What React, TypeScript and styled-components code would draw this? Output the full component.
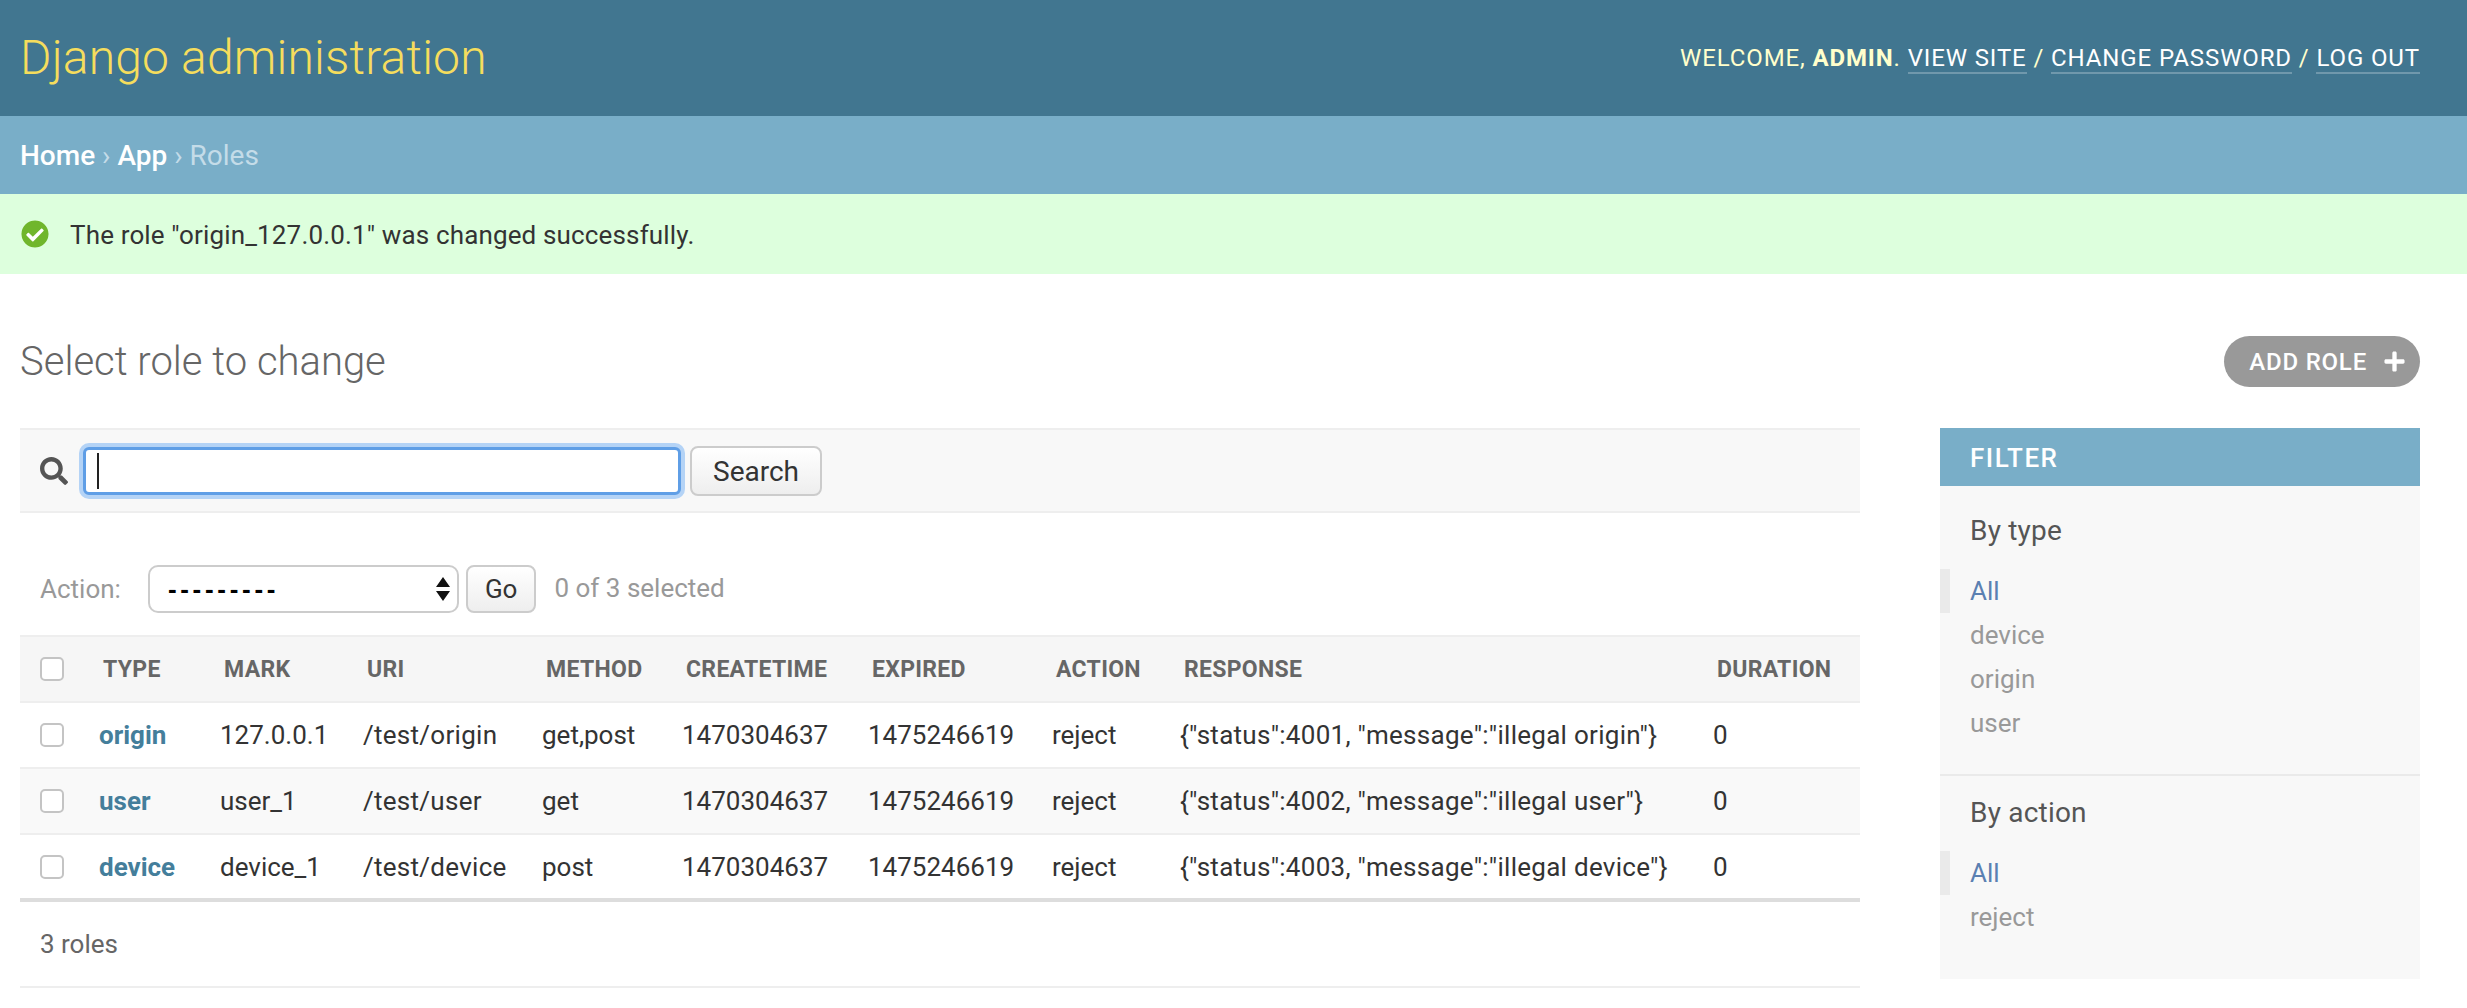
import * as React from "react";
import styled, { createGlobalStyle } from "styled-components";
import { FaSearch, FaCheckCircle, FaPlus } from "react-icons/fa";

const GlobalStyle = createGlobalStyle`
  html, body {
    margin: 0;
    padding: 0;
    background: #ffffff;
    font-family: Roboto, "Liberation Sans", sans-serif;
    color: #333333;
    overflow: hidden;
  }
  * { box-sizing: border-box; }
`;

const Header = styled("div")`
  display: flex;
  align-items: center;
  justify-content: space-between;
  height: 116px;
  padding: 0 47px 0 20px;
  background: #417690;
`;

const Branding = styled("h1")`
  margin: -2px 0 0;
  font-size: 48px;
  font-weight: 300;
  letter-spacing: 0.18px;
  color: #f5dd5d;
`;

const UserTools = styled("div")`
  font-size: 24px;
  font-weight: 400;
  letter-spacing: 0.88px;
  text-transform: uppercase;
  color: #ffc;

  strong {
    font-weight: 700;
  }
`;

const ToolLink = styled("a")`
  color: #fff;
  border-bottom: 2px solid rgba(255, 255, 255, 0.25);
  padding-bottom: 0;
`;

const Breadcrumbs = styled("div")`
  display: flex;
  align-items: center;
  height: 78px;
  padding: 0 20px;
  font-size: 28px;
  font-weight: 400;
  color: #c4dce8;
  background: #79aec8;

  a {
    color: #fff;
    font-weight: 500;
  }
`;

const Message = styled("div")`
  display: flex;
  align-items: center;
  gap: 21px;
  height: 80px;
  padding: 0 21px;
  font-size: 26px;
  letter-spacing: 0.15px;
  color: #333;
  background: #dfd;

  svg {
    width: 28px;
    height: 28px;
    color: #70b62c;
    background: radial-gradient(circle, #fff 55%, transparent 56%);
    border-radius: 50%;
  }
`;

const MessageText = styled("span")`
  padding-top: 1px;
`;

const Content = styled("div")`
  padding: 0 47px 0 20px;
`;

const TitleRow = styled("div")`
  display: flex;
  align-items: center;
  justify-content: space-between;
  height: 154px;
  padding-top: 21px;
`;

const PageTitle = styled("h2")`
  margin: 0;
  font-size: 40px;
  font-weight: 300;
  color: #666;
`;

const AddButton = styled("a")`
  display: flex;
  align-items: center;
  gap: 16px;
  height: 51px;
  padding: 0 14px 0 25px;
  border-radius: 26px;
  background: #999;
  color: #fff;
  font-size: 24px;
  font-weight: 500;
  letter-spacing: 0.8px;

  svg {
    width: 23px;
    height: 23px;
  }
`;

const Main = styled("div")`
  display: flex;
  align-items: flex-start;
  gap: 80px;
`;

const ChangeList = styled("div")`
  flex: 0 0 1840px;
`;

const Toolbar = styled("div")`
  display: flex;
  align-items: center;
  height: 85px;
  padding: 0 20px;
  background: #f8f8f8;
  border-top: 2px solid #eee;
  border-bottom: 2px solid #eee;

  svg {
    flex: none;
    width: 28px;
    height: 28px;
    color: #555;
    margin-right: 15px;
  }
`;

const SearchField = styled("div")`
  position: relative;
  width: 598px;
  height: 48px;
  margin-right: 9px;
  border: 3px solid #5f9ee6;
  border-radius: 6px;
  box-shadow: 0 0 0 4px #b4d3f6;
  background: #fff;
`;

const SearchCaret = styled("span")`
  position: absolute;
  left: 11px;
  top: 3px;
  width: 2px;
  height: 36px;
  background: #222;
`;

const SearchInput = styled("input")`
  display: block;
  width: 100%;
  height: 100%;
  border: 0;
  outline: 0;
  background: transparent;
`;

const Button = styled("button")<{ $large?: boolean }>`
  height: ${({ $large }) => ($large ? "50px" : "48px")};
  padding: ${({ $large }) => ($large ? "2px 21px 0" : "0 17px")};
  border: 2px solid #ccc;
  border-radius: 8px;
  background: linear-gradient(#ffffff, #eeeeee);
  color: #333;
  font-family: Roboto, sans-serif;
  font-size: ${({ $large }) => ($large ? "28px" : "26px")};
`;

const Actions = styled("div")`
  display: flex;
  align-items: center;
  height: 122px;
  padding: 30px 20px 0;
  font-size: 26px;
  color: #999;
`;

const ActionLabel = styled("label")`
  margin-right: 27px;
`;

const SelectWrap = styled("div")`
  position: relative;
  width: 311px;
  height: 48px;
  margin-right: 7px;
`;

const ActionSelect = styled("select")`
  appearance: none;
  width: 100%;
  height: 100%;
  padding: 0 18px;
  border: 2px solid #ccc;
  border-radius: 10px;
  background: #fff;
  color: #000;
  font-family: "Liberation Sans", sans-serif;
  font-size: 26px;
  font-weight: 700;
  letter-spacing: 3.7px;
`;

const SelectArrows = styled("svg")`
  position: absolute;
  right: 9px;
  top: 12px;
  width: 14px;
  height: 24px;
`;

const Counter = styled("span")`
  margin-left: 18px;
  margin-top: -2px;
`;

const Table = styled("table")`
  width: 100%;
  table-layout: fixed;
  border-collapse: collapse;
  border-top: 2px solid #eee;
  border-bottom: 4px solid #ddd;
`;

const Th = styled("th")`
  height: 66px;
  padding: 0 0 0 24px;
  background: #f6f6f6;
  border-bottom: 2px solid #eee;
  color: #666;
  font-size: 23px;
  font-weight: 700;
  letter-spacing: 0.3px;
  text-align: left;
  text-transform: uppercase;
  white-space: nowrap;
`;

const Row = styled("tr")<{ $alt?: boolean }>`
  background: ${({ $alt }) => ($alt ? "#f9f9f9" : "#fff")};
`;

const Td = styled("td")<{ $wide?: boolean }>`
  height: 66px;
  padding: 0 20px;
  border-bottom: 2px solid #eee;
  color: #333;
  font-size: 26px;
  letter-spacing: ${({ $wide }) => ($wide ? "0.28px" : "0")};
  white-space: nowrap;
`;

const CheckCell = styled(Td)`
  padding: 0 0 0 20px;
`;

const CheckHead = styled(Th)`
  padding: 0 0 0 20px;
`;

const Check = styled("input")`
  appearance: none;
  display: block;
  width: 24px;
  height: 24px;
  margin: 0;
  border: 2px solid #c4c4c4;
  border-radius: 5px;
  background: #fff;
`;

const RowLink = styled("a")`
  color: #447e9b;
  font-weight: 700;
`;

const Paginator = styled("p")`
  display: flex;
  align-items: center;
  height: 86px;
  margin: 0;
  padding: 0 20px;
  border-bottom: 2px solid #eee;
  color: #666;
  font-size: 26px;
`;

const Filter = styled("div")`
  flex: 0 0 480px;
  height: 551px;
  background: #f8f8f8;
`;

const FilterTitle = styled("h2")`
  display: flex;
  align-items: center;
  height: 58px;
  margin: 0;
  padding: 2px 30px 0;
  background: #79aec8;
  color: #fff;
  font-size: 26px;
  font-weight: 500;
  letter-spacing: 1.5px;
`;

const FilterGroup = styled("div")<{ $last?: boolean }>`
  padding: ${({ $last }) => ($last ? "19px 0 0" : "27px 0 29px")};
  border-bottom: ${({ $last }) => ($last ? "0" : "2px solid #eaeaea")};
`;

const FilterHeading = styled("h3")`
  margin: 0 0 20px;
  padding: 0 30px;
  color: #555;
  font-size: 28px;
  font-weight: 400;
  letter-spacing: 0.2px;
  line-height: 36px;
`;

const FilterItem = styled("div")<{ $selected?: boolean }>`
  height: 44px;
  line-height: 44px;
  padding-left: ${({ $selected }) => ($selected ? "20px" : "30px")};
  border-left: ${({ $selected }) => ($selected ? "10px solid #eaeaea" : "0")};
  color: ${({ $selected }) => ($selected ? "#5b80b2" : "#999")};
  font-size: 26px;
`;

const columns = [59, 121, 143, 179, 140, 186, 184, 128, 533, 167];
const headings = ["Type", "Mark", "Uri", "Method", "Createtime", "Expired", "Action", "Response", "Duration"];

const roles = [
  { type: "origin", mark: "127.0.0.1", uri: "/test/origin", method: "get,post", code: 4001 },
  { type: "user", mark: "user_1", uri: "/test/user", method: "get", code: 4002 },
  { type: "device", mark: "device_1", uri: "/test/device", method: "post", code: 4003 },
];

const filters = [
  { title: "By type", items: ["All", "device", "origin", "user"] },
  { title: "By action", items: ["All", "reject"] },
];

export default function App(): React.JSX.Element {
  return (
    <>
      <GlobalStyle />
      <Header>
        <Branding>Django administration</Branding>
        <UserTools>
          Welcome, <strong>admin</strong>. <ToolLink>View site</ToolLink> / <ToolLink>Change password</ToolLink> /{" "}
          <ToolLink>Log out</ToolLink>
        </UserTools>
      </Header>
      <Breadcrumbs>
        <a>Home</a>&nbsp;›&nbsp;<a>App</a>&nbsp;›&nbsp;Roles
      </Breadcrumbs>
      <Message>
        <FaCheckCircle />
        <MessageText>The role "origin_127.0.0.1" was changed successfully.</MessageText>
      </Message>
      <Content>
        <TitleRow>
          <PageTitle>Select role to change</PageTitle>
          <AddButton>
            ADD ROLE
            <FaPlus />
          </AddButton>
        </TitleRow>
        <Main>
          <ChangeList>
            <Toolbar>
              <FaSearch />
              <SearchField>
                <SearchInput type="text" />
                <SearchCaret />
              </SearchField>
              <Button $large>Search</Button>
            </Toolbar>
            <Actions>
              <ActionLabel>Action:</ActionLabel>
              <SelectWrap>
                <ActionSelect>
                  <option>---------</option>
                </ActionSelect>
                <SelectArrows viewBox="0 0 14 24">
                  <path d="M7 0 14 10H0zM7 24 0 14H14z" fill="#111" />
                </SelectArrows>
              </SelectWrap>
              <Button>Go</Button>
              <Counter>0 of 3 selected</Counter>
            </Actions>
            <Table>
              <colgroup>
                {columns.map((width, i) => (
                  <col key={i} width={width} />
                ))}
              </colgroup>
              <thead>
                <tr>
                  <CheckHead>
                    <Check type="checkbox" />
                  </CheckHead>
                  {headings.map((h) => (
                    <Th key={h}>{h}</Th>
                  ))}
                </tr>
              </thead>
              <tbody>
                {roles.map((role, i) => (
                  <Row key={role.type} $alt={i === 1}>
                    <CheckCell>
                      <Check type="checkbox" />
                    </CheckCell>
                    <Td>
                      <RowLink>{role.type}</RowLink>
                    </Td>
                    <Td>{role.mark}</Td>
                    <Td $wide>{role.uri}</Td>
                    <Td>{role.method}</Td>
                    <Td>1470304637</Td>
                    <Td>1475246619</Td>
                    <Td>reject</Td>
                    <Td $wide>{`{"status":${role.code}, "message":"illegal ${role.type}"}`}</Td>
                    <Td>0</Td>
                  </Row>
                ))}
              </tbody>
            </Table>
            <Paginator>3 roles</Paginator>
          </ChangeList>
          <Filter>
            <FilterTitle>FILTER</FilterTitle>
            {filters.map((group, g) => (
              <FilterGroup key={group.title} $last={g === filters.length - 1}>
                <FilterHeading>{group.title}</FilterHeading>
                {group.items.map((item, i) => (
                  <FilterItem key={item} $selected={i === 0}>
                    {item}
                  </FilterItem>
                ))}
              </FilterGroup>
            ))}
          </Filter>
        </Main>
      </Content>
    </>
  );
}
